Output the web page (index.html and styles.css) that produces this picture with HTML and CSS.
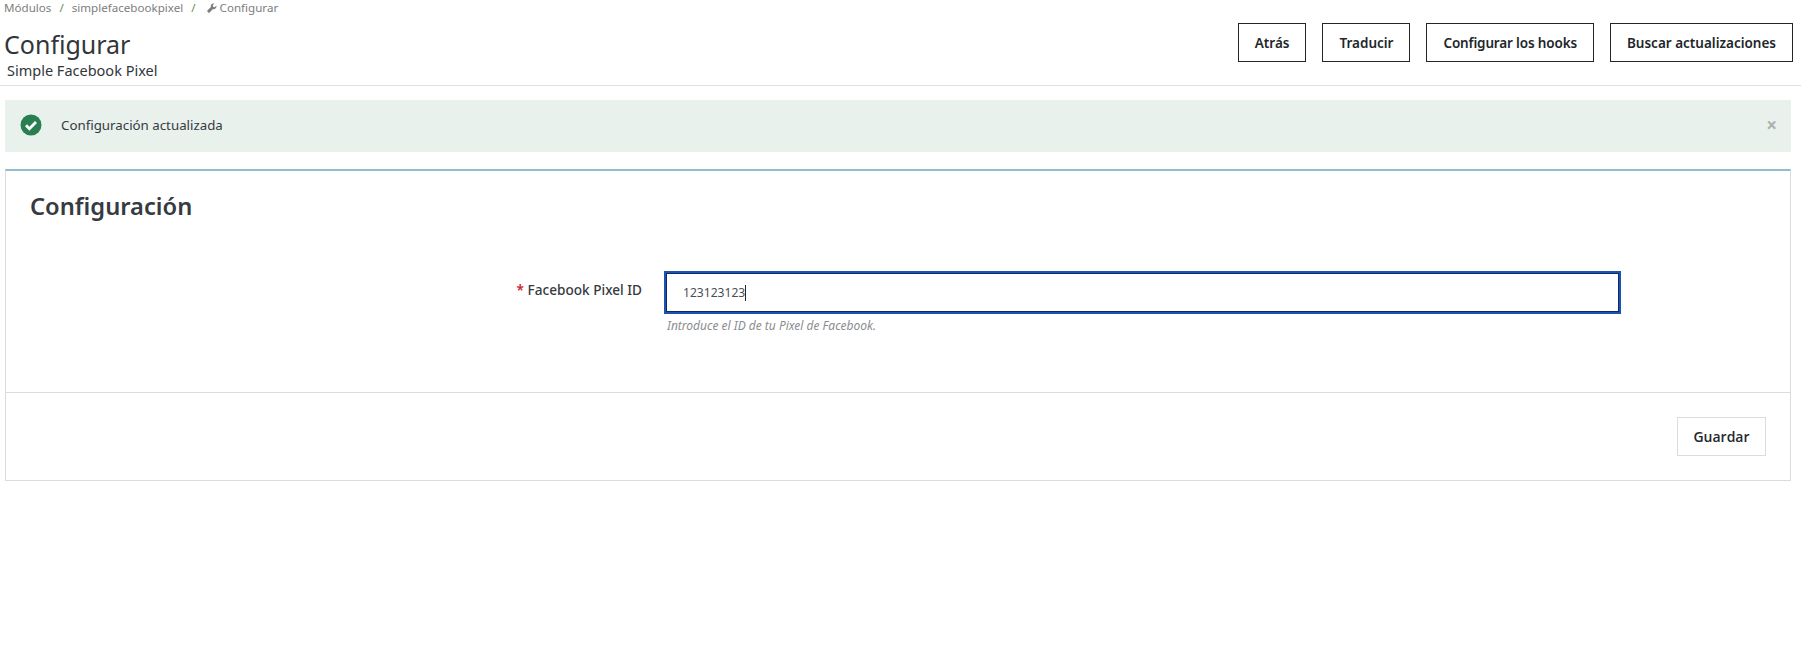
FILE: index.html
```html
<!DOCTYPE html>
<html lang="es">
<head>
<meta charset="utf-8">
<title>Configurar</title>
<link rel="stylesheet" href="styles.css">
</head>
<body>
<header class="page-head">
  <div class="titles">
    <nav class="crumbs">
      <span>Módulos</span><i class="sep">/</i><span>simplefacebookpixel</span><i class="sep">/</i>
      <svg class="wrench" viewBox="0 0 12 12" width="10" height="10"><path d="M11.3 3.1 9.3 5l-1.9-.5L6.9 2.600l1.900-1.900C7.400.2 5.900.6 5.100 1.700c-.7.9-.8 2-.4 3L.7 8.700c-.5.5-.5 1.300 0 1.900l.7.700c.5.500 1.300.5 1.800 0l4-4c1 .4 2.200.2 3-.6 1-1 1.300-2.200 1.100-3.300z" fill="#7d7d7d"/></svg>
      <span>Configurar</span>
    </nav>
    <h1>Configurar</h1>
    <p class="sub">Simple Facebook Pixel</p>
  </div>
  <div class="actions">
    <a class="btn">Atrás</a>
    <a class="btn">Traducir</a>
    <a class="btn btn-tight">Configurar los hooks</a>
    <a class="btn">Buscar actualizaciones</a>
  </div>
</header>
<main class="content">
  <div class="alert">
    <svg class="ok" viewBox="0 0 22 22" width="22" height="22"><circle cx="11" cy="11" r="10.500" fill="#2a7f50"/><path d="M6 11.300l3.400 3.400L16 8" fill="none" stroke="#fff" stroke-width="2.800"/></svg>
    <span class="msg">Configuración actualizada</span>
    <span class="close">×</span>
  </div>
  <section class="panel">
    <h2>Configuración</h2>
    <div class="form-row">
      <label class="lbl"><b>*</b> Facebook Pixel ID</label>
      <div class="field">
        <div class="input"><span>123123123</span><i class="caret"></i></div>
        <p class="help">Introduce el ID de tu Pixel de Facebook.</p>
      </div>
    </div>
    <div class="foot"><a class="save">Guardar</a></div>
  </section>
</main>
</body>
</html>
```
FILE: styles.css
```css
* { box-sizing: border-box; }
html, body { margin: 0; background: #fff; }
body { font-family: "Noto Sans", "Open Sans", sans-serif; color: #363a41; height: 645px; overflow: hidden; }
.page-head { display: flex; justify-content: space-between; align-items: flex-start; height: 86px; border-bottom: 1px solid #dfdfdf; padding: 0 8px 0 4px; }
.crumbs { display: flex; align-items: center; height: 16px; font-size: 11.600px; color: #7d7d7d; line-height: 16px; }
.sep { font-style: normal; color: #6b8e4e; margin: 0 8px; }
.wrench { margin: 0 3px 0 3px; }
h1 { margin: 12px 0 0; font-size: 25px; font-weight: 400; line-height: 32px; color: #32363a; }
.sub { margin: 1px 0 0 3px; font-size: 14.500px; line-height: 18px; color: #32363a; }
.actions { display: flex; gap: 16px; margin-top: 23px; }
.btn { display: flex; align-items: center; height: 39px; padding: 0 16px; border: 1px solid #22262a; font-size: 13.500px; font-weight: 600; color: #22262a; white-space: nowrap; }
.btn-tight { letter-spacing: -0.15px; }
.content { padding: 14px 10px 0 5px; }
.alert { display: flex; align-items: center; height: 52px; background: #e9f1ed; padding: 0 14px 2px 15px; font-size: 13.300px; }
.ok { flex: none; }
.msg { margin-left: 19px; flex: 1; color: #363a41; }
.close { font-size: 19px; font-weight: 700; color: #a9b2ae; line-height: 1; }
.panel { margin-top: 17px; height: 312px; border: 1px solid #dcdcdc; border-top: 2px solid #8fbfca; display: flex; flex-direction: column; }
h2 { margin: 18px 0 0 24px; font-size: 23.700px; line-height: 34px; font-weight: 600; color: #363a41; }
.form-row { display: flex; margin-top: 50px; flex: 1; }
.lbl { width: 636px; padding-top: 7px; text-align: right; font-size: 13.600px; font-weight: 500; line-height: 20px; color: #363a41; }
.lbl b { color: #c9262c; font-weight: 600; }
.field { margin-left: 24px; width: 953px; }
.input { display: flex; align-items: center; height: 39px; padding-left: 16px; border: 1px solid #0b2a66; font-size: 12.100px; color: #4a4e53; box-shadow: 0 0 0 2px #1c52b0; }
.caret { width: 1px; height: 16px; background: #22262a; }
.help { margin: 6px 0 0 1px; font-size: 12px; line-height: 16px; font-style: italic; color: #8a8d90; }
.foot { height: 88px; border-top: 1px solid #dcdcdc; padding: 24px 24px 0 0; display: flex; justify-content: flex-end; align-items: flex-start; }
.save { display: flex; align-items: center; justify-content: center; width: 89px; height: 39px; border: 1px solid #dcdcdc; font-family: "Open Sans", sans-serif; font-size: 14px; font-weight: 600; color: #25282c; }
```
